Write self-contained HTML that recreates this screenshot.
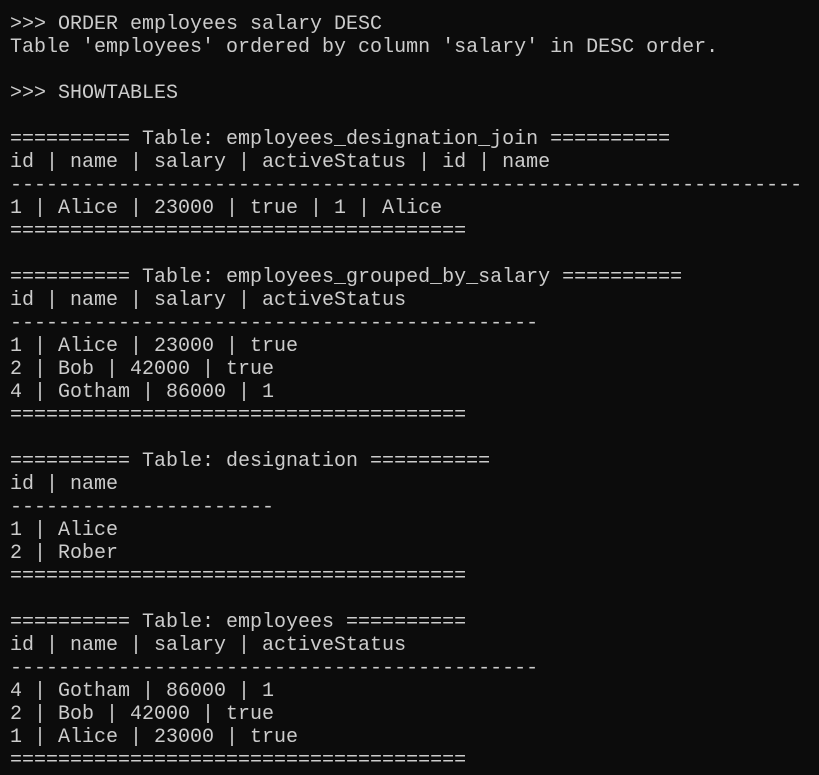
<!DOCTYPE html>
<html><head><meta charset="utf-8"><style>
html,body{margin:0;padding:0;background:#0c0c0c;}
body{width:819px;height:775px;overflow:hidden;}
pre{margin:0;padding:13px 0 0 10px;font-family:"Liberation Mono","DejaVu Sans Mono",monospace;font-size:20px;line-height:23px;color:#cccccc;white-space:pre;}
</style></head><body><pre>&gt;&gt;&gt; ORDER employees salary DESC
Table 'employees' ordered by column 'salary' in DESC order.

&gt;&gt;&gt; SHOWTABLES

========== Table: employees_designation_join ==========
id | name | salary | activeStatus | id | name
------------------------------------------------------------------
1 | Alice | 23000 | true | 1 | Alice
======================================

========== Table: employees_grouped_by_salary ==========
id | name | salary | activeStatus
--------------------------------------------
1 | Alice | 23000 | true
2 | Bob | 42000 | true
4 | Gotham | 86000 | 1
======================================

========== Table: designation ==========
id | name
----------------------
1 | Alice
2 | Rober
======================================

========== Table: employees ==========
id | name | salary | activeStatus
--------------------------------------------
4 | Gotham | 86000 | 1
2 | Bob | 42000 | true
1 | Alice | 23000 | true
======================================
</pre></body></html>
